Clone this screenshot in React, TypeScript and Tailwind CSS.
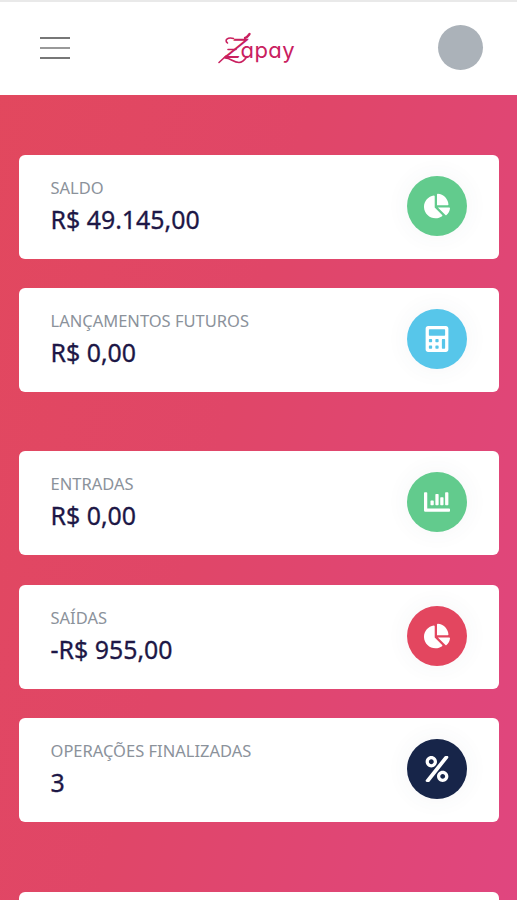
import type { IconType } from 'react-icons';
import { FaCalculator, FaChartBar, FaChartPie, FaPercent } from 'react-icons/fa';

type Stat = {
  label: string;
  value: string;
  icon: IconType;
  color: string;
};

const balance: Stat[] = [
  { label: 'Saldo', value: 'R$ 49.145,00', icon: FaChartPie, color: 'bg-[#62cb8d]' },
  { label: 'Lançamentos futuros', value: 'R$ 0,00', icon: FaCalculator, color: 'bg-[#57c6ea]' },
];

const movements: Stat[] = [
  { label: 'Entradas', value: 'R$ 0,00', icon: FaChartBar, color: 'bg-[#62cb8d]' },
  { label: 'Saídas', value: '-R$ 955,00', icon: FaChartPie, color: 'bg-[#e3465f]' },
  { label: 'Operações finalizadas', value: '3', icon: FaPercent, color: 'bg-[#172549]' },
];

function StatCard({ label, value, icon: Icon, color }: Stat) {
  return (
    <div className="flex h-[104px] items-start justify-between rounded-md bg-white pl-8 pr-[31.5px] pt-[21px]">
      <div>
        <h5 className="text-[16.5px] leading-6 text-[#8b929b] uppercase">{label}</h5>
        <span className="block text-[24.9px] leading-[38px] text-[#1d1746] [-webkit-text-stroke:0.3px_#1d1746]">
          {value}
        </span>
      </div>
      <div
        className={`flex size-[60px] items-center justify-center rounded-full text-white shadow-[0_0_24px_rgba(60,80,110,0.06)] ${color}`}
      >
        <Icon size={26} />
      </div>
    </div>
  );
}

function Logo() {
  return (
    <svg
      width="80"
      height="40"
      viewBox="0 0 80 40"
      fill="none"
      aria-label="Zapay"
      className="ml-1.5 overflow-visible"
    >
      <g fill="#c9205f">
        <text
          transform="translate(6 30) skewX(-28)"
          className="font-['Lato',sans-serif] text-[27px] font-normal"
        >
          Z
        </text>
        <text
          x="23.5"
          y="29.5"
          textLength="54"
          className="font-['Inter',sans-serif] text-[22px] [font-feature-settings:'cv11']"
        >
          apay
        </text>
      </g>
      {/* swashes around the initial */}
      <g stroke="#c9205f" strokeWidth="1.6" strokeLinecap="round">
        <path d="M10.5 15c-3.5-3 0-6 6-4.5" />
        <path d="M28 10c2 0 3-2 4.5-4" strokeWidth="2.4" />
        <path d="M2 34.5l7-6.5" />
        <path d="M8 30c6 0 8 4.5 14 4.5 4 0 6-3 8-6" />
        <path d="M11 21.5h8" />
      </g>
    </svg>
  );
}

export default function App() {
  return (
    <div className="h-[900px] overflow-hidden bg-[linear-gradient(105deg,#e2485d_0%,#e04668_45%,#e0467f_100%)] font-['Noto_Sans','Open_Sans',sans-serif]">
      <header className="flex h-[95px] items-center justify-between border-t-2 border-[#e9e9e9] bg-white pb-[2px] pl-10 pr-[34.5px]">
        <button type="button" aria-label="Menu" className="flex w-[30px] flex-col gap-2">
          <span className="h-0.5 bg-[#777]" />
          <span className="h-0.5 bg-[#999]" />
          <span className="h-0.5 bg-[#777]" />
        </button>
        <Logo />
        <div className="size-[45px] rounded-full bg-[#abb2b9]" />
      </header>

      <main className="px-[18.5px] pt-[59.6px]">
        <section className="flex flex-col gap-[29.5px]">
          {balance.map((stat) => (
            <StatCard key={stat.label} {...stat} />
          ))}
        </section>
        <section className="mt-[59px] flex flex-col gap-[29.5px]">
          {movements.map((stat) => (
            <StatCard key={stat.label} {...stat} />
          ))}
        </section>
        <section className="mt-[69.5px] h-[104px] rounded-md bg-white" />
      </main>
    </div>
  );
}
